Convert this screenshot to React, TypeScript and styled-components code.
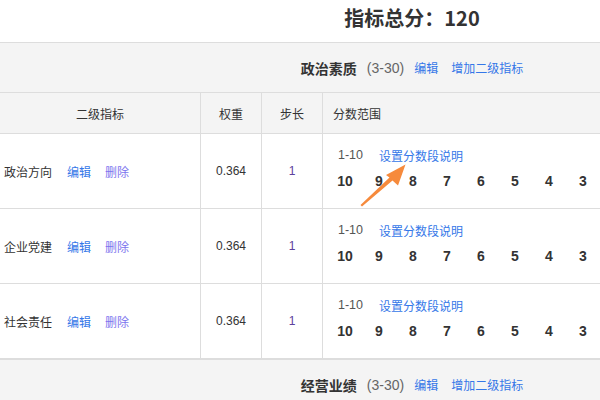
import styled, {createGlobalStyle} from "styled-components";

const GlobalStyle = createGlobalStyle`
    body{
        margin: 0;
        overflow: hidden;
        background: #fff;
        font-family: "Liberation Sans", "Noto Sans CJK SC", sans-serif;
        color: #333;
    }
`

// the visible part of a wider page: headings are centred on x = 412
const Page = styled.div`
    position: relative;
    width: 600px;
    overflow: hidden;
`

const TitleBar = styled.div`
    height: 42px;
    display: flex;
    justify-content: center;
    padding: 6px 0 0 224px;
    box-sizing: border-box;
`

const Title = styled.h2`
    margin: 0;
    font-size: 20px;
    line-height: 24px;
    font-weight: 700;
    color: #333;
    font-family: "Noto Sans CJK SC", sans-serif;
`

const GroupBar = styled.div`
    height: 51px;
    border-top: 1px solid #ddd;
    border-bottom: 1px solid #ddd;
    background: #f4f4f4;
    display: flex;
    justify-content: center;
    align-items: center;
    padding-left: 224px;
    box-sizing: border-box;
    font-size: 12px;
`

const GroupName = styled.span`
    font-weight: 700;
    font-size: 14px;
    color: #333;
    font-family: "Noto Sans CJK SC", sans-serif;
`

const Range = styled.span`
    margin-left: 10px;
    font-size: 14px;
    color: #666;
`

const Link = styled.a<{$tone?: "blue" | "purple"; $gap?: number}>`
    margin-left: ${p => p.$gap ?? 14}px;
    color: ${p => p.$tone === "purple" ? "#7c74ee" : "#3477e8"};
    font-size: 12px;
    font-family: "Noto Sans CJK SC", sans-serif;
    cursor: pointer;
`

const Row = styled.div<{$head?: boolean}>`
    display: grid;
    grid-template-columns: 201px 61px 61px 1fr;
    height: ${p => p.$head ? 41 : 75}px;
    border-bottom: 1px solid #ddd;
    background: ${p => p.$head ? "#f4f4f4" : "#fff"};
    box-sizing: border-box;
    font-size: 12px;
`

const Cell = styled.div<{$align?: "left" | "center"}>`
    display: flex;
    align-items: center;
    justify-content: ${p => p.$align === "left" ? "flex-start" : "center"};
    border-right: 1px solid #ddd;
    padding-left: ${p => p.$align === "left" ? 4 : 0}px;
    font-family: "Noto Sans CJK SC", sans-serif;
    color: #333;
    &:last-child{
        border-right: 0;
    }
`

const HeadScore = styled(Cell)`
    padding-left: 10px;
`

const Num = styled.span<{$step?: boolean}>`
    font-family: "Liberation Sans", sans-serif;
    color: ${p => p.$step ? "#5e419c" : "#333"};
`

const ScoreCell = styled.div`
    padding: 11px 0 0 5px;
    display: flex;
    flex-direction: column;
    gap: 6px;
`

const ScoreTop = styled.div`
    display: flex;
    align-items: center;
    height: 20px;
    padding-left: 10px;
`

const RangeText = styled.span`
    font-family: "Liberation Sans", sans-serif;
    font-size: 12.5px;
    color: #555;
`

const Scores = styled.div`
    display: flex;
    height: 20px;
    align-items: center;
`

const Score = styled.span`
    width: 34px;
    text-align: center;
    font-family: "Liberation Sans", sans-serif;
    font-weight: 700;
    font-size: 14px;
    color: #333;
`

const Arrow = styled.svg`
    position: absolute;
    left: 0;
    top: 0;
    pointer-events: none;
`

const items = ["政治方向", "企业党建", "社会责任"]
const scores = [10, 9, 8, 7, 6, 5, 4, 3]

function Group({name}: {name: string}){
    return(
        <GroupBar>
            <GroupName>{name}</GroupName>
            <Range>(3-30)</Range>
            <Link $gap={10}>编辑</Link>
            <Link $gap={13}>增加二级指标</Link>
        </GroupBar>
    )
}

export default function App(){
    return(
        <Page>
            <GlobalStyle/>
            <TitleBar><Title>指标总分：120</Title></TitleBar>
            <Group name="政治素质"/>
            <Row $head>
                <Cell>二级指标</Cell>
                <Cell>权重</Cell>
                <Cell>步长</Cell>
                <HeadScore $align="left">分数范围</HeadScore>
            </Row>
            {items.map(item => (
                <Row key={item}>
                    <Cell $align="left">
                        {item}
                        <Link $gap={15}>编辑</Link>
                        <Link $gap={14} $tone="purple">删除</Link>
                    </Cell>
                    <Cell><Num>0.364</Num></Cell>
                    <Cell><Num $step>1</Num></Cell>
                    <ScoreCell>
                        <ScoreTop>
                            <RangeText>1-10</RangeText>
                            <Link $gap={16}>设置分数段说明</Link>
                        </ScoreTop>
                        <Scores>
                            {scores.map(s => <Score key={s}>{s}</Score>)}
                        </Scores>
                    </ScoreCell>
                </Row>
            ))}
            <Group name="经营业绩"/>
            <Arrow width="600" height="400" viewBox="0 0 600 400">
                <polygon
                    points="360.5,205 389.5,177.5 386,175 405.5,164.5 398,185.5 392.5,180.5 362,206.5"
                    fill="#f68a3c"
                />
            </Arrow>
        </Page>
    )
}
